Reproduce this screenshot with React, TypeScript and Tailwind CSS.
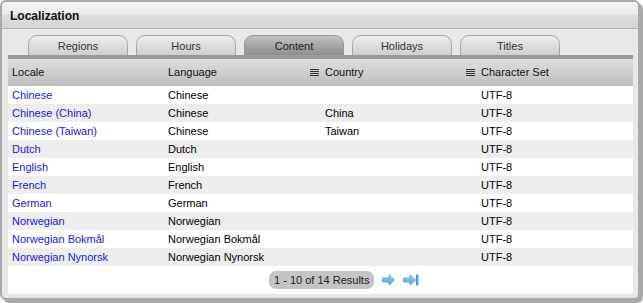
import React from 'react';

const rows = [
  { locale: 'Chinese', language: 'Chinese', country: '', charset: 'UTF-8' },
  { locale: 'Chinese (China)', language: 'Chinese', country: 'China', charset: 'UTF-8' },
  { locale: 'Chinese (Taiwan)', language: 'Chinese', country: 'Taiwan', charset: 'UTF-8' },
  { locale: 'Dutch', language: 'Dutch', country: '', charset: 'UTF-8' },
  { locale: 'English', language: 'English', country: '', charset: 'UTF-8' },
  { locale: 'French', language: 'French', country: '', charset: 'UTF-8' },
  { locale: 'German', language: 'German', country: '', charset: 'UTF-8' },
  { locale: 'Norwegian', language: 'Norwegian', country: '', charset: 'UTF-8' },
  { locale: 'Norwegian Bokmål', language: 'Norwegian Bokmål', country: '', charset: 'UTF-8' },
  { locale: 'Norwegian Nynorsk', language: 'Norwegian Nynorsk', country: '', charset: 'UTF-8' },
];

const tabs = ['Regions', 'Hours', 'Content', 'Holidays', 'Titles'];

function SortIcon() {
  return (
    <svg width="9" height="8" viewBox="0 0 9 8" className="shrink-0">
      <rect x="0" y="0" width="9" height="1" fill="#333" />
      <rect x="0" y="2" width="9" height="1" fill="#333" />
      <rect x="0" y="4" width="9" height="1" fill="#333" />
      <rect x="0" y="6" width="9" height="1" fill="#333" />
    </svg>
  );
}

function NextArrow({ last }: { last?: boolean }) {
  return (
    <svg width="16" height="12" viewBox="0 0 16 12">
      <defs>
        <linearGradient id={last ? 'ga2' : 'ga1'} x1="0" y1="0" x2="0" y2="1">
          <stop offset="0" stopColor="#a6dcf7" />
          <stop offset="1" stopColor="#3fa3dd" />
        </linearGradient>
      </defs>
      <polygon
        points="0.5,4 7,4 7,0.8 12.5,6 7,11.2 7,8 0.5,8"
        fill={`url(#${last ? 'ga2' : 'ga1'})`}
        stroke="#4a9fd3"
        strokeWidth="0.8"
      />
      {last && <rect x="13" y="0.5" width="2.4" height="11" fill="#3fa3dd" />}
    </svg>
  );
}

export default function App() {
  return (
    <div className="w-[643px] h-[303px] bg-white font-['Liberation_Sans',Arial,sans-serif] text-[11px] text-black">
      <div className="w-[640px] h-[300px] border-2 border-[#a9a9a9] rounded-[6px] shadow-[3px_3px_0_#a9a9a9] bg-[#e8e8e8] flex flex-col overflow-hidden">
        {/* Title bar */}
        <div className="h-[27px] shrink-0 bg-[linear-gradient(#f4f4f4,#ececec_45%,#dcdcdc_55%,#d6d6d6)] border-b border-[#b3b3b3] flex items-center pl-2 pt-[1px]">
          <span className="font-bold text-[12px] text-[#111]">Localization</span>
        </div>

        {/* Tabs */}
        <div className="h-[26px] shrink-0 flex items-end gap-2 pl-[26px] pt-[6px]">
          {tabs.map((t) => (
            <div
              key={t}
              className={
                t === 'Content'
                  ? 'w-[100px] h-[20px] rounded-t-[9px] border border-b-0 border-[#9a9a9a] bg-[linear-gradient(#c4c4c4,#a6a6a6_50%,#8e8e8e)] flex items-center justify-center pt-[1px] text-[#222]'
                  : 'w-[100px] h-[20px] rounded-t-[9px] border border-b-0 border-[#a8a8a8] bg-[linear-gradient(#ededed,#dedede_50%,#cfcfcf)] flex items-center justify-center pt-[1px] text-[#333]'
              }
            >
              {t}
            </div>
          ))}
        </div>

        {/* Panel */}
        <div className="ml-[6px] mr-[5px] mb-[4px] flex-1 bg-white flex flex-col border-t-4 border-[#9c9c9c]">
          <div className="h-[27px] grid grid-cols-[156px_142px_156px_1fr] items-center bg-[linear-gradient(#dedede,#cecece_50%,#bdbdbd)] text-[#111]">
            <div className="pl-1">Locale</div>
            <div className="pl-1">Language</div>
            <div className="pl-1 flex items-center gap-[6px]">
              <SortIcon />
              <span>Country</span>
            </div>
            <div className="pl-1 flex items-center gap-[6px]">
              <SortIcon />
              <span>Character Set</span>
            </div>
          </div>

          {rows.map((r, i) => (
            <div
              key={r.locale}
              className={`h-[18px] grid grid-cols-[156px_142px_156px_1fr] items-center ${i % 2 === 1 ? 'bg-[#eeeeee]' : 'bg-white'}`}
            >
              <div className="pl-1 text-[#1717ea]">{r.locale}</div>
              <div className="pl-1">{r.language}</div>
              <div className="pl-[19px]">{r.country}</div>
              <div className="pl-[19px]">{r.charset}</div>
            </div>
          ))}

          <div className="flex items-center pl-[261px] pt-[5px] gap-[8px]">
            <div className="h-[18px] px-[5px] rounded-[7px] bg-[#c4c4c4] flex items-center text-[#222]">
              1 - 10 of 14 Results
            </div>
            <div className="flex items-center gap-[5px]">
              <NextArrow />
              <NextArrow last />
            </div>
          </div>
        </div>
      </div>
    </div>
  );
}
